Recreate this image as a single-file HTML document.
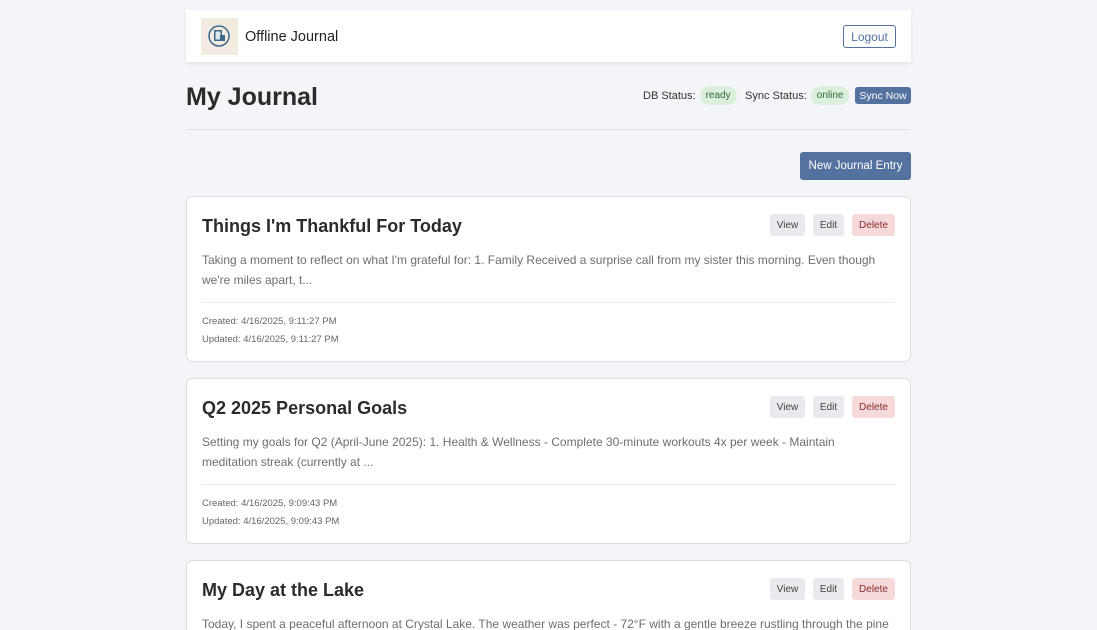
<!DOCTYPE html>
<html><head><style>
*{box-sizing:border-box;margin:0;padding:0}
html,body{width:1097px;height:630px;overflow:hidden}
body{background:#f4f5f9;font-family:"Liberation Sans",sans-serif;color:#333;position:relative}
.wrap{position:absolute;left:186px;width:725px}
.hdr{top:10px;height:52px;background:#fff;box-shadow:0 2px 4px rgba(0,0,0,.08)}
.logo{position:absolute;left:15px;top:8px;width:37px;height:37px;background:#f3ebe0}
.brand{position:absolute;left:59px;top:19px;font-size:14.5px;color:#222}
.logout{position:absolute;right:15px;top:15px;width:53px;height:23px;border:1px solid #5472a0;border-radius:3px;font-size:12px;color:#5472a0;display:flex;align-items:center;justify-content:center}
h1{position:absolute;left:186px;top:83px;font-size:25px;font-weight:bold;color:#2b2b2b}
.status{position:absolute;top:86px;font-size:11px;color:#333;display:flex;align-items:center;height:19px}
.pill{background:#dcefdc;color:#2e6b35;border-radius:10px;padding:0 6px;height:19px;display:flex;align-items:center;font-size:10px;margin-left:4px}
.sync{position:absolute;left:855px;top:87px;width:56px;height:17px;background:#5472a0;color:#fff;font-size:10.5px;display:flex;align-items:center;justify-content:center;border-radius:3px}
.hr{position:absolute;left:186px;top:129px;width:725px;height:1px;background:#dfe1e6}
.new{position:absolute;left:800px;top:152px;width:111px;height:28px;background:#5472a0;color:#fff;font-size:11.5px;display:flex;align-items:center;justify-content:center;border-radius:3px}
.card{position:absolute;left:186px;width:725px;height:166px;background:#fff;border:1px solid #dcdde2;border-radius:6px}
.card h2{position:absolute;left:15px;top:19px;font-size:18px;font-weight:bold;color:#2b2b2b}
.btns{position:absolute;top:17px;right:15px;display:flex;gap:8px}
.b{height:22px;display:flex;align-items:center;justify-content:center;font-size:10px;border-radius:3px;background:#e8eaee;color:#444}
.del{background:#f6d9d9;color:#8a2b2b}
.card p{position:absolute;left:15px;top:53px;width:695px;font-size:12px;line-height:20px;color:#6e6e6e}
.sep{position:absolute;left:15px;right:15px;top:105px;height:1px;background:#ececef}
.meta{position:absolute;left:15px;font-size:9.5px;color:#666}
</style></head><body>
<div class="wrap hdr">
<div class="logo"><svg width="37" height="37" viewBox="0 0 37 37"><circle cx="18" cy="18" r="10" fill="none" stroke="#3d6a8c" stroke-width="1.5"/><rect x="13" y="12" width="8" height="11" fill="#3d6a8c"/><rect x="14.5" y="13.5" width="5" height="8" fill="#dfe6ee"/><rect x="19" y="17" width="5" height="6" fill="#3d6a8c"/></svg></div>
<div class="brand">Offline Journal</div>
<div class="logout">Logout</div>
</div>
<h1>My Journal</h1>
<div class="status" style="left:643px">DB Status:<span class="pill">ready</span></div>
<div class="status" style="left:745px">Sync Status:<span class="pill">online</span></div>
<div class="sync">Sync Now</div>
<div class="hr"></div>
<div class="new">New Journal Entry</div>

<div class="card" style="top:196px">
<h2>Things I'm Thankful For Today</h2>
<div class="btns"><div class="b" style="width:35px">View</div><div class="b" style="width:31px">Edit</div><div class="b del" style="width:43px">Delete</div></div>
<p>Taking a moment to reflect on what I'm grateful for: 1. Family Received a surprise call from my sister this morning. Even though<br>we're miles apart, t...</p>
<div class="sep"></div>
<div class="meta" style="top:119px">Created: 4/16/2025, 9:11:27 PM</div>
<div class="meta" style="top:137px">Updated: 4/16/2025, 9:11:27 PM</div>
</div>

<div class="card" style="top:378px">
<h2>Q2 2025 Personal Goals</h2>
<div class="btns"><div class="b" style="width:35px">View</div><div class="b" style="width:31px">Edit</div><div class="b del" style="width:43px">Delete</div></div>
<p>Setting my goals for Q2 (April-June 2025): 1. Health &amp; Wellness - Complete 30-minute workouts 4x per week - Maintain<br>meditation streak (currently at ...</p>
<div class="sep"></div>
<div class="meta" style="top:119px">Created: 4/16/2025, 9:09:43 PM</div>
<div class="meta" style="top:137px">Updated: 4/16/2025, 9:09:43 PM</div>
</div>

<div class="card" style="top:560px">
<h2>My Day at the Lake</h2>
<div class="btns"><div class="b" style="width:35px">View</div><div class="b" style="width:31px">Edit</div><div class="b del" style="width:43px">Delete</div></div>
<p>Today, I spent a peaceful afternoon at Crystal Lake. The weather was perfect - 72°F with a gentle breeze rustling through the pine</p>
</div>
</body></html>
